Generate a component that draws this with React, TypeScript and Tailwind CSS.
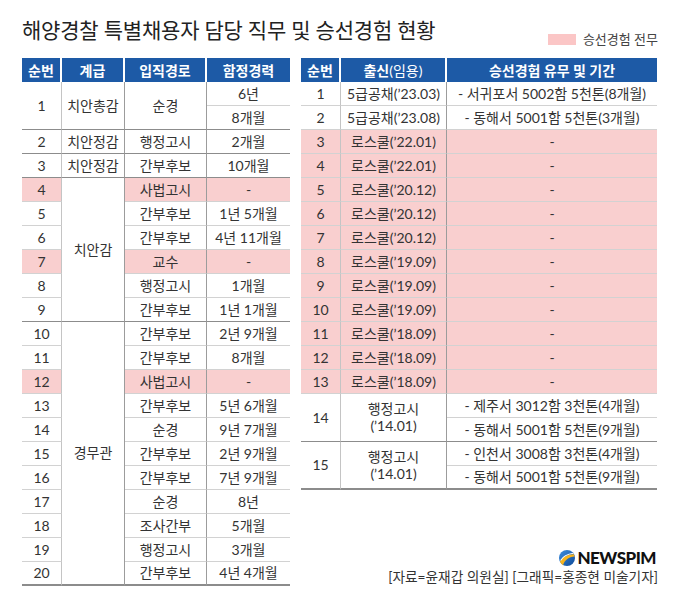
import React from 'react';

const FONT = { fontFamily: "Lato, 'Noto Sans CJK KR', sans-serif" };

type LRow = { no: string; path: string; career: string; pink?: boolean };
type LGroup = { rank: string; rows: LRow[] };

const groups: LGroup[] = [
  { rank: '치안정감', rows: [{ no: '2', path: '행정고시', career: '2개월' }] },
  { rank: '치안정감', rows: [{ no: '3', path: '간부후보', career: '10개월' }] },
  {
    rank: '치안감',
    rows: [
      { no: '4', path: '사법고시', career: '-', pink: true },
      { no: '5', path: '간부후보', career: '1년 5개월' },
      { no: '6', path: '간부후보', career: '4년 11개월' },
      { no: '7', path: '교수', career: '-', pink: true },
      { no: '8', path: '행정고시', career: '1개월' },
      { no: '9', path: '간부후보', career: '1년 1개월' },
    ],
  },
  {
    rank: '경무관',
    rows: [
      { no: '10', path: '간부후보', career: '2년 9개월' },
      { no: '11', path: '간부후보', career: '8개월' },
      { no: '12', path: '사법고시', career: '-', pink: true },
      { no: '13', path: '간부후보', career: '5년 6개월' },
      { no: '14', path: '순경', career: '9년 7개월' },
      { no: '15', path: '간부후보', career: '2년 9개월' },
      { no: '16', path: '간부후보', career: '7년 9개월' },
      { no: '17', path: '순경', career: '8년' },
      { no: '18', path: '조사간부', career: '5개월' },
      { no: '19', path: '행정고시', career: '3개월' },
      { no: '20', path: '간부후보', career: '4년 4개월' },
    ],
  },
];

const spanClass: Record<number, string> = { 1: '', 6: 'row-span-6', 11: 'row-span-11' };

const rightRows = [
  { no: '3', from: '로스쿨(’22.01)' },
  { no: '4', from: '로스쿨(’22.01)' },
  { no: '5', from: '로스쿨(’20.12)' },
  { no: '6', from: '로스쿨(’20.12)' },
  { no: '7', from: '로스쿨(’20.12)' },
  { no: '8', from: '로스쿨(’19.09)' },
  { no: '9', from: '로스쿨(’19.09)' },
  { no: '10', from: '로스쿨(’19.09)' },
  { no: '11', from: '로스쿨(’18.09)' },
  { no: '12', from: '로스쿨(’18.09)' },
  { no: '13', from: '로스쿨(’18.09)' },
];

// border presets
const LIGHT_B = 'border-b border-b-[#d2d2d2]';
const DARK_B = 'border-b border-b-[#8c8c8c]';
const END_B = 'border-b-2 border-b-[#8c8c8c]';
const SOFT_R = 'border-r border-r-[#c4c4c4]';
const MID_R = 'border-r border-r-[#9c9c9c]';

const Cell = ({ children, className = '' }: { children?: React.ReactNode; className?: string }) => (
  <div className={`flex items-center justify-center text-center text-[14px] leading-none text-[#333] ${className}`}>
    {children}
  </div>
);

const Head = ({ children, last }: { children: React.ReactNode; last?: boolean }) => (
  <div
    className={`flex items-center justify-center bg-[#1d5aa6] text-[14px] font-bold text-white ${last ? '' : 'border-r-2 border-r-white'}`}
  >
    {children}
  </div>
);

const Logo = () => (
  <svg width="16" height="16" viewBox="0 0 20 20">
    <defs>
      <linearGradient id="g" x1="0" y1="0" x2="1" y2="1">
        <stop offset="0" stopColor="#3d8ee0" />
        <stop offset="1" stopColor="#0f4a98" />
      </linearGradient>
    </defs>
    <circle cx="10" cy="10" r="10" fill="url(#g)" />
    <path d="M1.2 14.5 C4 9 9 6 18.5 5.2 L19.6 8 C12 8.5 7.5 12 5 19 C3.2 17.8 2 16.3 1.2 14.5 Z" fill="#f6b41e" />
    <path d="M2 13 C5 8 10 5 18 4" stroke="#fff" strokeWidth="1.3" fill="none" />
  </svg>
);

export default function App() {
  return (
    <div className="w-[680px] h-[608px] bg-white px-[22px] pt-[18px]" style={FONT}>
      {/* Title + legend */}
      <div className="flex items-end justify-between h-[24px]">
        <h1 className="text-[21px] leading-6 font-normal text-[#222] tracking-[-0.2px]">
          해양경찰 특별채용자 담당 직무 및 승선경험 현황
        </h1>
        <div className="flex items-center gap-[7px] -mb-[4px]">
          <span className="w-[28px] h-[11px] bg-[#fbc6c6]" />
          <span className="text-[13px] text-[#444] leading-none">승선경험 전무</span>
        </div>
      </div>

      <div className="mt-[16px] flex items-stretch gap-[11px]">
        {/* Left table */}
        <div className="grid w-[268px] grid-cols-[40px_63px_82px_83px] auto-rows-[24px]">
          <Head>순번</Head>
          <Head>계급</Head>
          <Head>입직경로</Head>
          <Head last>함정경력</Head>

          <Cell className={`row-span-2 ${SOFT_R} ${DARK_B}`}>1</Cell>
          <Cell className={`row-span-2 ${MID_R} ${DARK_B}`}>치안총감</Cell>
          <Cell className={`row-span-2 ${MID_R} ${DARK_B}`}>순경</Cell>
          <Cell className={LIGHT_B}>6년</Cell>
          <Cell className={DARK_B}>8개월</Cell>

          {groups.map((g, gi) => {
            const lastGroup = gi === groups.length - 1;
            return g.rows.map((r, ri) => {
              const lastRow = ri === g.rows.length - 1;
              const bottom = lastRow ? (lastGroup ? END_B : DARK_B) : LIGHT_B;
              const bg = r.pink ? 'bg-[#f9cfcf]' : '';
              return (
                <React.Fragment key={r.no}>
                  <Cell className={`${SOFT_R} ${bottom} ${bg}`}>{r.no}</Cell>
                  {ri === 0 && (
                    <Cell className={`${spanClass[g.rows.length]} ${MID_R} ${lastGroup ? END_B : DARK_B}`}>
                      {g.rank}
                    </Cell>
                  )}
                  <Cell className={`${MID_R} ${bottom} ${bg}`}>{r.path}</Cell>
                  <Cell className={`${bottom} ${bg}`}>{r.career}</Cell>
                </React.Fragment>
              );
            });
          })}
        </div>

        {/* Right column */}
        <div className="flex flex-1 flex-col justify-between">
          <div className="grid w-[356px] grid-cols-[40px_106px_210px] auto-rows-[24px]">
            <Head>순번</Head>
            <Head>
              출신<span className="font-normal">(임용)</span>
            </Head>
            <Head last>승선경험 유무 및 기간</Head>

            <Cell className={`${SOFT_R} ${LIGHT_B}`}>1</Cell>
            <Cell className={`${MID_R} ${LIGHT_B}`}>5급공채(’23.03)</Cell>
            <Cell className={LIGHT_B}>- 서귀포서 5002함 5천톤(8개월)</Cell>
            <Cell className={`${SOFT_R} ${LIGHT_B}`}>2</Cell>
            <Cell className={`${MID_R} ${LIGHT_B}`}>5급공채(’23.08)</Cell>
            <Cell className={LIGHT_B}>- 동해서 5001함 5천톤(3개월)</Cell>

            {rightRows.map((r) => (
              <React.Fragment key={r.no}>
                <Cell className={`bg-[#f9cfcf] ${SOFT_R} ${LIGHT_B}`}>{r.no}</Cell>
                <Cell className={`bg-[#f9cfcf] ${MID_R} ${LIGHT_B}`}>{r.from}</Cell>
                <Cell className={`bg-[#f9cfcf] ${LIGHT_B}`}>-</Cell>
              </React.Fragment>
            ))}

            <Cell className={`row-span-2 ${SOFT_R} ${DARK_B}`}>14</Cell>
            <Cell className={`row-span-2 flex-col gap-[3px] ${MID_R} ${DARK_B}`}>
              <span>행정고시</span>
              <span>(’14.01)</span>
            </Cell>
            <Cell className={LIGHT_B}>- 제주서 3012함 3천톤(4개월)</Cell>
            <Cell className={DARK_B}>- 동해서 5001함 5천톤(9개월)</Cell>

            <Cell className={`row-span-2 ${SOFT_R} ${END_B}`}>15</Cell>
            <Cell className={`row-span-2 flex-col gap-[3px] ${MID_R} ${END_B}`}>
              <span>행정고시</span>
              <span>(’14.01)</span>
            </Cell>
            <Cell className={LIGHT_B}>- 인천서 3008함 3천톤(4개월)</Cell>
            <Cell className={END_B}>- 동해서 5001함 5천톤(9개월)</Cell>
          </div>

          {/* Source / logo */}
          <div className="flex flex-col items-end gap-[3px] pb-[1px]">
            <div className="flex items-center gap-[2px] pr-[2px]">
              <Logo />
              <span className="text-[17px] font-black leading-none tracking-[-0.5px] text-[#111]">NEWSPIM</span>
            </div>
            <span className="text-[13.7px] leading-4 text-[#333]">[자료=윤재갑 의원실] [그래픽=홍종현 미술기자]</span>
          </div>
        </div>
      </div>
    </div>
  );
}
